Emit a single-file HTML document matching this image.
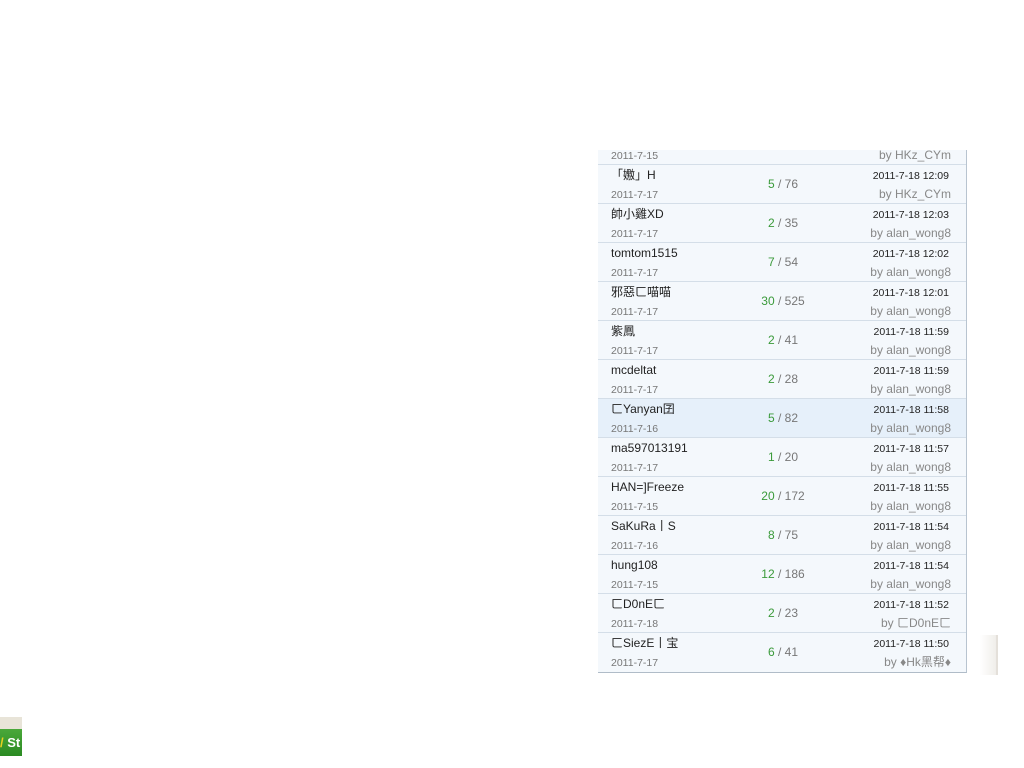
<!DOCTYPE html>
<html><head><meta charset="utf-8"><style>
body{margin:0;width:1024px;height:768px;background:#fff;position:relative;overflow:hidden;font-family:"Liberation Sans","Noto Sans CJK TC",sans-serif;}
#p{position:absolute;left:598px;top:150px;width:368px;height:522px;background:#f4f8fc;border-right:1px solid #b8c4d0;border-bottom:1px solid #b0bcc8;overflow:hidden;}
.r{position:absolute;left:0;width:368px;height:38px;border-bottom:1px solid #d4dee8;}
.r div{position:absolute;line-height:14px;height:14px;white-space:nowrap}
.n{left:13px;top:3px;font-size:12px;color:#222;}
.d{left:13px;top:23px;font-size:10.5px;color:#777;}
.c{left:130px;width:110px;text-align:center;top:12px;font-size:12px;color:#777;}
.c b{font-weight:normal;color:#3a9a3a;}
.t{right:17px;top:4px;font-size:10.5px;color:#222;}
.u{right:15px;top:22px;font-size:12px;color:#888;}
</style></head><body>
<div id="p">
<div class="r" style="top:-24px"><div class="d">2011-7-15</div><div class="u">by HKz_CYm</div></div>
<div class="r" style="top:15px"><div class="n">「嫐」H</div><div class="d">2011-7-17</div><div class="c"><b>5</b> / 76</div><div class="t">2011-7-18 12:09</div><div class="u">by HKz_CYm</div></div>
<div class="r" style="top:54px"><div class="n">帥小雞XD</div><div class="d">2011-7-17</div><div class="c"><b>2</b> / 35</div><div class="t">2011-7-18 12:03</div><div class="u">by alan_wong8</div></div>
<div class="r" style="top:93px"><div class="n">tomtom1515</div><div class="d">2011-7-17</div><div class="c"><b>7</b> / 54</div><div class="t">2011-7-18 12:02</div><div class="u">by alan_wong8</div></div>
<div class="r" style="top:132px"><div class="n">邪惡ㄈ喵喵</div><div class="d">2011-7-17</div><div class="c"><b>30</b> / 525</div><div class="t">2011-7-18 12:01</div><div class="u">by alan_wong8</div></div>
<div class="r" style="top:171px"><div class="n">紫鳳</div><div class="d">2011-7-17</div><div class="c"><b>2</b> / 41</div><div class="t">2011-7-18 11:59</div><div class="u">by alan_wong8</div></div>
<div class="r" style="top:210px"><div class="n">mcdeltat</div><div class="d">2011-7-17</div><div class="c"><b>2</b> / 28</div><div class="t">2011-7-18 11:59</div><div class="u">by alan_wong8</div></div>
<div class="r" style="top:249px;background:#e6f0fa"><div class="n">ㄈYanyan囝</div><div class="d">2011-7-16</div><div class="c"><b>5</b> / 82</div><div class="t">2011-7-18 11:58</div><div class="u">by alan_wong8</div></div>
<div class="r" style="top:288px"><div class="n">ma597013191</div><div class="d">2011-7-17</div><div class="c"><b>1</b> / 20</div><div class="t">2011-7-18 11:57</div><div class="u">by alan_wong8</div></div>
<div class="r" style="top:327px"><div class="n">HAN=]Freeze</div><div class="d">2011-7-15</div><div class="c"><b>20</b> / 172</div><div class="t">2011-7-18 11:55</div><div class="u">by alan_wong8</div></div>
<div class="r" style="top:366px"><div class="n">SaKuRa丨S</div><div class="d">2011-7-16</div><div class="c"><b>8</b> / 75</div><div class="t">2011-7-18 11:54</div><div class="u">by alan_wong8</div></div>
<div class="r" style="top:405px"><div class="n">hung108</div><div class="d">2011-7-15</div><div class="c"><b>12</b> / 186</div><div class="t">2011-7-18 11:54</div><div class="u">by alan_wong8</div></div>
<div class="r" style="top:444px"><div class="n">ㄈD0nEㄈ</div><div class="d">2011-7-18</div><div class="c"><b>2</b> / 23</div><div class="t">2011-7-18 11:52</div><div class="u">by ㄈD0nEㄈ</div></div>
<div class="r" style="top:483px;border-bottom:none"><div class="n">ㄈSiezE丨宝</div><div class="d">2011-7-17</div><div class="c"><b>6</b> / 41</div><div class="t">2011-7-18 11:50</div><div class="u">by ♦Hk黑帮♦</div></div>
</div>
<div style="position:absolute;left:980px;top:635px;width:16px;height:40px;background:linear-gradient(90deg,#fff,#f0eeea);border-right:2px solid #e4e0da"></div>
<div style="position:absolute;left:0;top:717px;width:22px;height:12px;background:#e8e4d8"></div>
<div style="position:absolute;left:0;top:729px;width:22px;height:27px;background:linear-gradient(#4aa83a,#2a8a22);color:#fff;font:bold 13px 'Liberation Sans',sans-serif;line-height:27px;overflow:hidden;white-space:nowrap"><span style="color:#e8d020">/</span> St</div>
</body></html>
